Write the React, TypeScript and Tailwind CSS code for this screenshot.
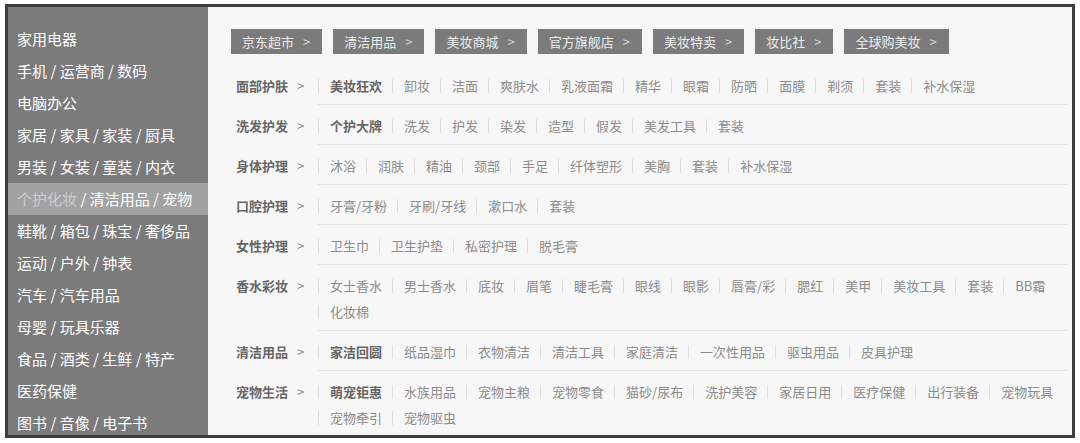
import React from "react";

const sideItems: string[][] = [
  ["家用电器"],
  ["手机", "运营商", "数码"],
  ["电脑办公"],
  ["家居", "家具", "家装", "厨具"],
  ["男装", "女装", "童装", "内衣"],
  ["个护化妆", "清洁用品", "宠物"],
  ["鞋靴", "箱包", "珠宝", "奢侈品"],
  ["运动", "户外", "钟表"],
  ["汽车", "汽车用品"],
  ["母婴", "玩具乐器"],
  ["食品", "酒类", "生鲜", "特产"],
  ["医药保健"],
  ["图书", "音像", "电子书"],
];

const tags = ["京东超市", "清洁用品", "美妆商城", "官方旗舰店", "美妆特卖", "妆比社", "全球购美妆"];

// first item of a row is bold when `hot` is set
const rows: { label: string; hot?: boolean; items: string[] }[] = [
  {
    label: "面部护肤",
    hot: true,
    items: ["美妆狂欢", "卸妆", "洁面", "爽肤水", "乳液面霜", "精华", "眼霜", "防晒", "面膜", "剃须", "套装", "补水保湿"],
  },
  {
    label: "洗发护发",
    hot: true,
    items: ["个护大牌", "洗发", "护发", "染发", "造型", "假发", "美发工具", "套装"],
  },
  {
    label: "身体护理",
    items: ["沐浴", "润肤", "精油", "颈部", "手足", "纤体塑形", "美胸", "套装", "补水保湿"],
  },
  { label: "口腔护理", items: ["牙膏/牙粉", "牙刷/牙线", "漱口水", "套装"] },
  { label: "女性护理", items: ["卫生巾", "卫生护垫", "私密护理", "脱毛膏"] },
  {
    label: "香水彩妆",
    items: ["女士香水", "男士香水", "底妆", "眉笔", "睫毛膏", "眼线", "眼影", "唇膏/彩", "腮红", "美甲", "美妆工具", "套装", "BB霜", "化妆棉"],
  },
  {
    label: "清洁用品",
    hot: true,
    items: ["家洁回圆", "纸品湿巾", "衣物清洁", "清洁工具", "家庭清洁", "一次性用品", "驱虫用品", "皮具护理"],
  },
  {
    label: "宠物生活",
    hot: true,
    items: ["萌宠钜惠", "水族用品", "宠物主粮", "宠物零食", "猫砂/尿布", "洗护美容", "家居日用", "医疗保健", "出行装备", "宠物玩具", "宠物牵引", "宠物驱虫"],
  },
];

export default function App() {
  return (
    <div
      className="w-[1080px] h-[443px] bg-white pl-[5px] pt-[4px]"
      style={{ fontFamily: '"Noto Sans CJK SC", "Noto Sans", sans-serif' }}
    >
      <div className="w-[1070px] h-[434px] border-[3px] border-[#3d3d3d] flex overflow-hidden">
        {/* ── Sidebar ── */}
        <aside className="w-[200px] shrink-0 bg-[#7b7b7b] pt-[16px]">
          {sideItems.map((parts, i) => (
            <div
              key={i}
              className={`h-[32px] leading-[32px] pl-[9px] text-[15px] text-white whitespace-nowrap ${
                i === 5 ? "bg-[#a2a2a2]" : ""
              }`}
            >
              {parts.map((p, j) => (
                <React.Fragment key={p}>
                  {j > 0 && <span> / </span>}
                  <span className={i === 5 && j === 0 ? "text-[#cdcdcd]" : ""}>{p}</span>
                </React.Fragment>
              ))}
            </div>
          ))}
        </aside>

        {/* ── Panel ── */}
        <section className="flex-1 bg-[#f7f7f7] pl-[23px] pr-[4px] pt-[22px]">
          <div className="flex gap-[11px] mb-[10px]">
            {tags.map((t) => (
              <div
                key={t}
                className="h-[25px] leading-[25px] bg-[#7b7b7b] text-[#ececec] text-[13px] pl-[11px] pr-[12px] whitespace-nowrap"
              >
                {t}
                <span className="ml-[9px] text-[#d8d8d8]">&gt;</span>
              </div>
            ))}
          </div>

          {rows.map((row, ri) => (
            <div key={row.label} className="flex">
              <div className="w-[87px] shrink-0 pl-[5px] pt-[9px] leading-[26px] text-[13px] font-bold text-[#666] whitespace-nowrap">
                {row.label}
                <span className="ml-[9px] font-normal text-[#888]">&gt;</span>
              </div>
              <div
                className={`flex-1 flex flex-wrap pt-[8px] pb-[5px] ${
                  ri > 0 ? "border-t border-[#e6e6e6]" : "border-t border-transparent"
                }`}
              >
                {row.items.map((it, ii) => (
                  <span
                    key={it + ii}
                    className={`my-[6px] leading-[14px] border-l border-[#dedede] pl-[11px] pr-[10px] text-[13px] whitespace-nowrap ${
                      row.hot && ii === 0 ? "font-bold text-[#666]" : "text-[#8c8c8c]"
                    }`}
                  >
                    {it}
                  </span>
                ))}
              </div>
            </div>
          ))}
        </section>
      </div>
    </div>
  );
}
